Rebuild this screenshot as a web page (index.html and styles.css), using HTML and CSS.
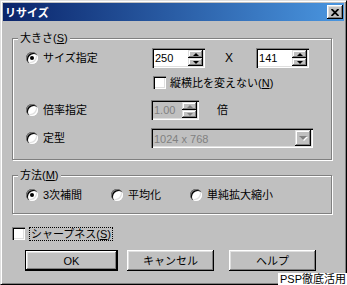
FILE: index.html
```html
<!DOCTYPE html>
<html>
<head>
<meta charset="utf-8">
<title>リサイズ</title>
<link rel="stylesheet" href="styles.css">
</head>
<body>
<div class="window">
  <div class="titlebar">
    <span class="title">リサイズ</span>
    <span class="close"><svg width="8" height="7" viewBox="0 0 8 7"><path d="M0.5 0 L7.5 7 M7.5 0 L0.5 7" stroke="#000" stroke-width="1.8"/></svg></span>
  </div>

  <div class="content">
    <div class="group size">
      <span class="group-title">大きさ(<u>S</u>)</span>

      <div class="row r1">
        <span class="opt"><span class="radio on"></span><span class="lbl">サイズ指定</span></span>
        <span class="edit num"><span class="val">250</span><span class="spin"><i class="up"></i><i class="dn"></i></span></span>
        <span class="times">X</span>
        <span class="edit num"><span class="val">141</span><span class="spin"><i class="up"></i><i class="dn"></i></span></span>
      </div>

      <div class="row r2">
        <span class="opt"></span>
        <span class="check keep"></span><span class="lbl">縦横比を変えない(<u>N</u>)</span>
      </div>

      <div class="row r3">
        <span class="opt"><span class="radio"></span><span class="lbl">倍率指定</span></span>
        <span class="edit num small off"><span class="val">1.00</span><span class="spin"><i class="up"></i><i class="dn"></i></span></span>
        <span class="unit">倍</span>
      </div>

      <div class="row r4">
        <span class="opt"><span class="radio"></span><span class="lbl">定型</span></span>
        <span class="combo off"><span class="val">1024 x 768</span><i class="drop"></i></span>
      </div>
    </div>

    <div class="group method">
      <span class="group-title">方法(<u>M</u>)</span>
      <div class="methods">
        <span class="opt"><span class="radio on"></span><span class="lbl">3次補間</span></span>
        <span class="opt"><span class="radio"></span><span class="lbl">平均化</span></span>
        <span class="opt"><span class="radio"></span><span class="lbl">単純拡大縮小</span></span>
      </div>
    </div>

    <div class="sharp">
      <span class="check"></span><span class="lbl focus">シャープネス(<u>S</u>)</span>
    </div>

    <div class="buttons">
      <span class="btn default ok">OK</span>
      <span class="btn cancel">キャンセル</span>
      <span class="btn help">ヘルプ</span>
    </div>
  </div>
</div>

<div class="credit">PSP徹底活用</div>
</body>
</html>
```

FILE: styles.css
```css
body {margin:0; overflow:hidden; font-family:"Liberation Sans","Noto Sans CJK JP",sans-serif; font-size:11px; line-height:12px; color:#000;}

.window {width:347px; height:285px; box-sizing:border-box; padding:2px; background:#c0c0c0; border:1px solid; border-color:#dfdfdf #000 #000 #dfdfdf; box-shadow:inset 1px 1px #fff, inset -1px -1px #808080;}

.titlebar {display:flex; align-items:center; justify-content:space-between; height:18px; padding:0 1px 0 2px; background:linear-gradient(to right, #0a246a, #4a96e0);}
.title {color:#fff; font-weight:bold; font-family:"Noto Sans CJK JP",sans-serif;}
.close {display:flex; align-items:center; justify-content:center; width:16px; height:14px; background:#c0c0c0; box-shadow:inset -1px -1px #000, inset 1px 1px #fff, inset -2px -2px #808080, inset 2px 2px #dfdfdf;}

.content {padding:17px 0 0 9px;}

/* etched group box */
.group {width:320px; box-sizing:border-box; border:1px solid #808080; box-shadow:inset 1px 1px #fff, 1px 1px #fff;}
.group-title {display:block; width:max-content; margin:-7px 0 0 5px; padding:0 2px; background:#c0c0c0;}
.size {padding-bottom:11px;}
.method {margin-top:15px; padding-bottom:12px;}

.row {display:flex; align-items:center; padding-left:13px;}
.r1 {margin-top:4px; height:20px;}
.r2 {margin-top:8px; height:13px;}
.r3 {margin-top:11px; height:20px;}
.r4 {margin-top:8px; height:20px;}

.opt {display:flex; align-items:center; width:126px;}
.lbl {margin-left:5px; white-space:nowrap;}

.radio {display:block; flex:none; width:12px; height:12px; border-radius:50%; background:#fff; box-shadow:inset 1px 1px #808080, inset 2px 2px #000, inset -1px -1px #fff, inset -2px -2px #dfdfdf;}
.radio.on::after {content:""; display:block; width:4px; height:4px; margin:4px; border-radius:50%; background:#000;}

.check {display:block; flex:none; width:13px; height:13px; background:#fff; box-shadow:inset 1px 1px #808080, inset 2px 2px #000, inset -1px -1px #fff, inset -2px -2px #dfdfdf;}
.keep {margin-left:1px;}
.keep + .lbl {margin-left:4px;}

/* sunken edit with up-down */
.edit, .combo {display:flex; box-sizing:border-box; height:20px; padding:2px; background:#fff; box-shadow:inset 1px 1px #808080, inset 2px 2px #000, inset -1px -1px #fff, inset -2px -2px #dfdfdf;}
.edit.num {width:53px;}
.edit.small {width:48px; margin-left:-1px;}
.edit .val, .combo .val {flex:1; padding:2px 0 0 1px;}
.off {background:#c0c0c0; color:#808080;}

.spin {display:flex; flex-direction:column; width:15px;}
.spin i, .drop {display:flex; align-items:center; justify-content:center; background:#c0c0c0; box-shadow:inset -1px -1px #000, inset 1px 1px #dfdfdf, inset -2px -2px #808080, inset 2px 2px #fff;}
.spin i {height:8px;}
.spin i::after, .drop::after {content:""; border-left:3px solid transparent; border-right:3px solid transparent;}
.spin .up::after {border-bottom:3px solid #000;}
.spin .dn::after {border-top:3px solid #000;}
.off .spin .up::after {border-bottom-color:#808080;}
.off .spin .dn::after {border-top-color:#808080;}

.times {margin:0 23px 0 20px; font-size:12px;}
.unit {margin-left:18px;}

.combo {width:162px; margin-left:-1px;}
.combo .val {padding-top:3px;}
.drop {width:16px; height:16px;}
.drop::after {border-left-width:4px; border-right-width:4px; border-top:4px solid #808080; filter:drop-shadow(1px 1px 0 #fff);}

.methods {display:grid; grid-template-columns:85px 79px auto; margin-top:8px; padding-left:13px;}
.methods .opt {width:auto;}

.sharp {display:flex; align-items:center; height:13px; margin-top:13px;}
.sharp .lbl {margin-left:5px; padding:0 1px; outline:1px dotted #000;}

.buttons {display:flex; margin-top:10px; padding-left:13px;}
.btn {display:flex; align-items:center; justify-content:center; height:21px; background:#c0c0c0; box-shadow:inset -1px -1px #000, inset 1px 1px #fff, inset -2px -2px #808080, inset 2px 2px #dfdfdf;}
.btn.default {box-shadow:inset 0 0 0 1px #000, inset -2px -2px #000, inset 2px 2px #fff, inset -3px -3px #808080, inset 3px 3px #dfdfdf;}
.ok {width:93px;}
.cancel {width:87px; margin-left:9px;}
.help {width:87px; margin-left:15px;}

.credit {position:absolute; right:0; bottom:0; padding:0 1px 0 2px; background:#fff; color:#000; font-family:"Liberation Sans","Noto Sans CJK JP",sans-serif; font-size:11px; line-height:12px;}
```
